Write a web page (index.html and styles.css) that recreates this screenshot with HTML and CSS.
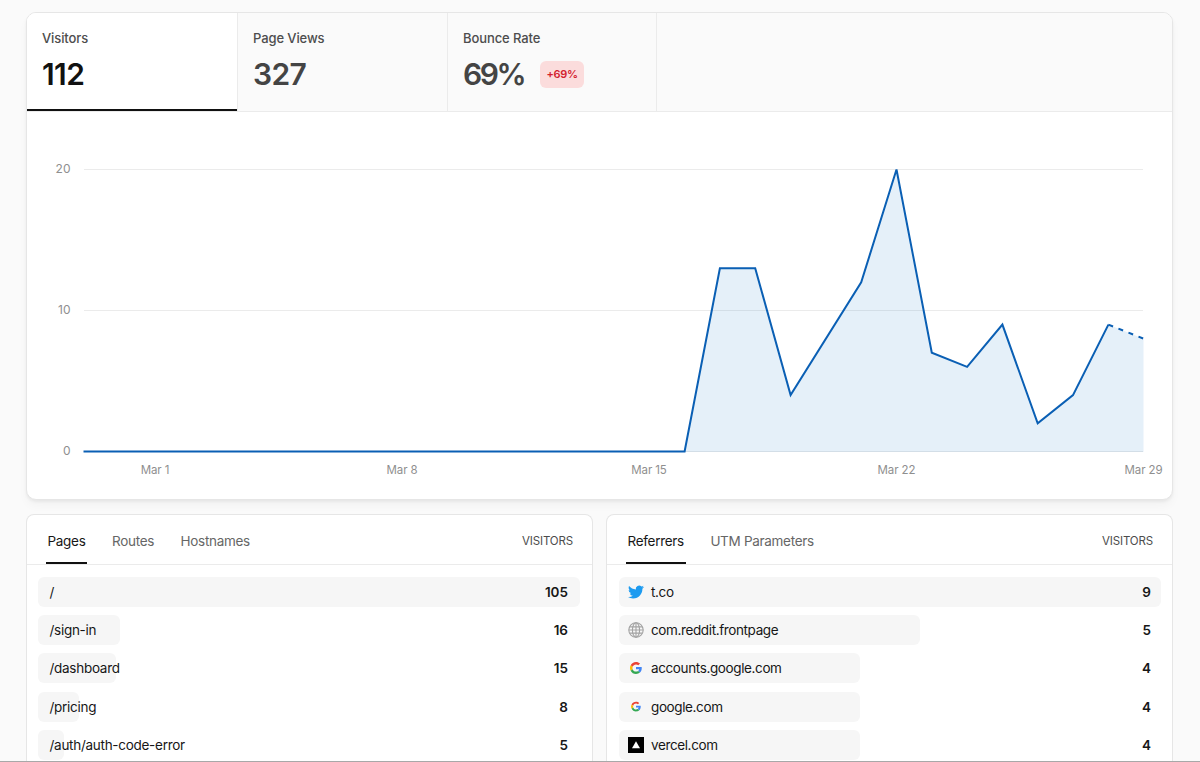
FILE: index.html
```html
<!DOCTYPE html>
<html lang="en">
<head>
  <meta charset="UTF-8">
  <meta name="viewport" content="width=device-width, initial-scale=1.0">
  <title>Analytics</title>
  <link rel="stylesheet" href="styles.css">
</head>
<body>
  <main class="dashboard">
    <section class="card overview">
      <div class="metrics">
        <div class="metric active">
          <div class="metric-label">Visitors</div>
          <div class="metric-value">112</div>
        </div>
        <div class="metric">
          <div class="metric-label">Page Views</div>
          <div class="metric-value">327</div>
        </div>
        <div class="metric">
          <div class="metric-label">Bounce Rate</div>
          <div class="metric-value percent">69% <span class="change">+69%</span></div>
        </div>
        <div class="metric"></div>
      </div>

      <svg class="chart" width="1145" height="387" viewBox="0 0 1145 387">
        <g class="grid">
          <path d="M57 57.5H1116M57 198.5H1116M57 339.5H1116" />
        </g>
        <path class="area" d="M657.2 340L692.5 156.2L727.8 156.2L763.2 283.1L833.8 170.3L869.2 57.5L904.5 240.8L939.8 254.9L975.2 212.6L1010.5 311.3L1045.8 283.1L1081.2 212.6L1116.5 226.7V340Z" />
        <polyline class="line" points="56.5,339.5 657.6,339.5 692.9,156.2 728.2,156.2 763.6,283.1 834.2,170.3 869.5,57.5 904.8,240.8 940.1,254.9 975.4,212.6 1010.7,311.3 1046,283.1 1081.4,212.6" />
        <path class="line dashed" d="M1081.4 212.6L1118 227.2" />
        <g class="axis axis-y">
          <text x="43.5" y="61">20</text>
          <text x="43.5" y="202">10</text>
          <text x="43.5" y="343">0</text>
        </g>
        <g class="axis axis-x">
          <text x="128" y="362">Mar 1</text>
          <text x="375" y="362">Mar 8</text>
          <text x="622" y="362">Mar 15</text>
          <text x="869.5" y="362">Mar 22</text>
          <text x="1116.5" y="362">Mar 29</text>
        </g>
      </svg>
    </section>

    <div class="panels">
      <section class="card panel">
        <header class="panel-header">
          <nav class="tabs">
            <a class="tab active">Pages</a>
            <a class="tab">Routes</a>
            <a class="tab">Hostnames</a>
          </nav>
          <span class="column-title">VISITORS</span>
        </header>
        <ul class="rows">
          <li class="row"><div class="bar" style="width: 100%"></div><span class="name">/</span><span class="count">105</span></li>
          <li class="row"><div class="bar" style="width: 15.2%"></div><span class="name">/sign-in</span><span class="count">16</span></li>
          <li class="row"><div class="bar" style="width: 14.3%"></div><span class="name">/dashboard</span><span class="count">15</span></li>
          <li class="row"><div class="bar" style="width: 7.6%"></div><span class="name">/pricing</span><span class="count">8</span></li>
          <li class="row"><div class="bar" style="width: 4.8%"></div><span class="name">/auth/auth-code-error</span><span class="count">5</span></li>
        </ul>
      </section>

      <section class="card panel">
        <header class="panel-header">
          <nav class="tabs">
            <a class="tab active">Referrers</a>
            <a class="tab">UTM Parameters</a>
          </nav>
          <span class="column-title">VISITORS</span>
        </header>
        <ul class="rows referrers">
          <li class="row">
            <div class="bar" style="width: 100%"></div>
            <svg class="icon" viewBox="0 0 24 24"><path fill="#1d9bf0" d="M23.95 4.57a10 10 0 0 1-2.82.77 4.96 4.96 0 0 0 2.16-2.72c-.95.55-2 .96-3.13 1.18a4.92 4.92 0 0 0-8.38 4.48C7.69 8.09 4.07 6.13 1.64 3.16a4.82 4.82 0 0 0-.67 2.48c0 1.71.87 3.21 2.19 4.1a4.9 4.9 0 0 1-2.23-.62v.06a4.92 4.92 0 0 0 3.95 4.83 5 5 0 0 1-2.21.08 4.94 4.94 0 0 0 4.6 3.42A9.87 9.87 0 0 1 0 19.54a13.99 13.99 0 0 0 7.55 2.21c9.05 0 14-7.5 14-13.98 0-.21 0-.42-.02-.63a9.94 9.94 0 0 0 2.46-2.55z"/></svg>
            <span class="name">t.co</span><span class="count">9</span>
          </li>
          <li class="row">
            <div class="bar" style="width: 55.5%"></div>
            <svg class="icon" viewBox="0 0 16 16" fill="none" stroke="#a3a3a3" stroke-width="1.1"><circle cx="8" cy="8" r="7.2"/><ellipse cx="8" cy="8" rx="3.6" ry="7.2"/><path d="M.8 8h14.4M1.8 4.9h12.4M1.8 11.1h12.4M8 .8v14.4"/></svg>
            <span class="name">com.reddit.frontpage</span><span class="count">5</span>
          </li>
          <li class="row">
            <div class="bar" style="width: 44.4%"></div>
            <svg class="icon" viewBox="-8 -8 64 64"><path fill="#ea4335" d="M24 9.5c3.54 0 6.71 1.22 9.21 3.6l6.85-6.85C35.9 2.38 30.47 0 24 0 14.62 0 6.51 5.38 2.56 13.22l7.98 6.19C12.43 13.72 17.74 9.5 24 9.5z"/><path fill="#4285f4" d="M46.98 24.55c0-1.57-.15-3.09-.38-4.55H24v9.02h12.94c-.58 2.96-2.26 5.48-4.78 7.18l7.73 6c4.51-4.18 7.09-10.36 7.09-17.65z"/><path fill="#fbbc05" d="M10.53 28.59A14.5 14.5 0 0 1 9.77 24c0-1.6.27-3.14.76-4.59l-7.98-6.19A23.94 23.94 0 0 0 0 24c0 3.88.92 7.54 2.56 10.78l7.97-6.19z"/><path fill="#34a853" d="M24 48c6.48 0 11.93-2.13 15.89-5.81l-7.73-6c-2.15 1.45-4.92 2.3-8.16 2.3-6.26 0-11.57-4.22-13.47-9.91l-7.98 6.19C6.51 42.62 14.62 48 24 48z"/></svg>
            <span class="name">accounts.google.com</span><span class="count">4</span>
          </li>
          <li class="row">
            <div class="bar" style="width: 44.4%"></div>
            <svg class="icon" viewBox="-15 -13 78 78"><path fill="#ea4335" d="M24 9.5c3.54 0 6.71 1.22 9.21 3.6l6.85-6.85C35.9 2.38 30.47 0 24 0 14.62 0 6.51 5.38 2.56 13.22l7.98 6.19C12.43 13.72 17.74 9.5 24 9.5z"/><path fill="#4285f4" d="M46.98 24.55c0-1.57-.15-3.09-.38-4.55H24v9.02h12.94c-.58 2.96-2.26 5.48-4.78 7.18l7.73 6c4.51-4.18 7.09-10.36 7.09-17.65z"/><path fill="#fbbc05" d="M10.53 28.59A14.5 14.5 0 0 1 9.77 24c0-1.6.27-3.14.76-4.59l-7.98-6.19A23.94 23.94 0 0 0 0 24c0 3.88.92 7.54 2.56 10.78l7.97-6.19z"/><path fill="#34a853" d="M24 48c6.48 0 11.93-2.13 15.89-5.81l-7.73-6c-2.15 1.45-4.92 2.3-8.16 2.3-6.26 0-11.57-4.22-13.47-9.91l-7.98 6.19C6.51 42.62 14.62 48 24 48z"/></svg>
            <span class="name">google.com</span><span class="count">4</span>
          </li>
          <li class="row">
            <div class="bar" style="width: 44.4%"></div>
            <svg class="icon" viewBox="0 0 16 16"><path d="M0 0h16v16H0z"/><path fill="#fff" d="M8 4.2l4 7H4z"/></svg>
            <span class="name">vercel.com</span><span class="count">4</span>
          </li>
        </ul>
      </section>
    </div>
  </main>
</body>
</html>
```
FILE: styles.css
```css
* {
  box-sizing: border-box;
}
body {
  font-family: Inter, "Liberation Sans", sans-serif;
  background-color: #fafafa;
  color: #171717;
  height: 762px;
  margin: 0;
  border-bottom: 1px solid #a8a8a8;
}
.dashboard {
  padding: 12px 27px 0 26px;
}
.card {
  background: white;
  border: 1px solid #e6e6e6;
  border-radius: 10px;
  overflow: hidden;
}
.overview {
  height: 488px;
  box-shadow: 0 2px 3px rgba(0, 0, 0, 0.05), 0 6px 10px rgba(0, 0, 0, 0.03);
}

/* Metrics */
.metrics {
  display: grid;
  grid-template-columns: 211px 210px 209px 1fr;
  height: 99px;
  border-bottom: 1px solid #ebebeb;
  background: #fafafa;
}
.metric {
  padding: 16px 15px 0;
  border-right: 1px solid #ebebeb;
  color: #444;
}
.metric:last-child {
  border-right: none;
}
.metric.active {
  background: white;
  box-shadow: inset 0 -2px #111;
}
.metric-label {
  font-size: 13px;
  font-weight: 500;
  line-height: 18px;
  letter-spacing: -0.1px;
  color: #4d4d4d;
}
.metric-value {
  display: flex;
  align-items: center;
  margin-top: 8px;
  font-size: 30px;
  font-weight: 600;
  line-height: 38px;
  letter-spacing: -0.6px;
}
.metric-value.percent {
  letter-spacing: -2.5px;
}
.metric.active .metric-value {
  color: #111;
}
.change {
  margin-left: 16px;
  padding: 0 6.5px;
  border-radius: 6px;
  background: #fbdcdc;
  color: #d3222f;
  font-size: 11px;
  line-height: 27px;
  letter-spacing: -0.3px;
}

/* Chart */
.chart {
  display: block;
}
.grid {
  stroke: #ebebeb;
}
.area {
  fill: rgba(0, 104, 200, 0.1);
}
.line {
  fill: none;
  stroke: #0a5fb4;
  stroke-width: 2;
}
.dashed {
  stroke-dasharray: 5 5.8;
}
.axis {
  fill: #8f8f8f;
  font-size: 12px;
}
.axis-y {
  text-anchor: end;
}
.axis-x {
  font-size: 11.5px;
  letter-spacing: -0.1px;
  text-anchor: middle;
}

/* Panels */
.panels {
  display: grid;
  grid-template-columns: 1fr 1fr;
  gap: 13px;
  margin-top: 14px;
}
.panel {
  height: 247px;
  border-bottom: none;
  border-radius: 8px 8px 0 0;
}
.panel-header {
  display: flex;
  justify-content: space-between;
  height: 50px;
  padding: 0 19px;
  border-bottom: 1px solid #ebebeb;
  line-height: 52px;
}
.tabs {
  display: flex;
  gap: 23px;
}
.tab {
  height: 49px;
  padding: 0 2px 0 1.5px;
  color: #666;
  font-size: 13.5px;
  letter-spacing: -0.3px;
}
.tab.active {
  color: #171717;
  box-shadow: inset 0 -2px #111;
}
.column-title {
  color: #4d4d4d;
  font-size: 11.5px;
  line-height: 53px;
  letter-spacing: -0.15px;
}
.rows {
  display: grid;
  gap: 8.2px;
  list-style: none;
  margin: 0;
  padding: 12px 12px 0 11px;
}
.row {
  display: flex;
  align-items: center;
  position: relative;
  height: 30px;
  padding: 0 12px 0 11.5px;
  font-size: 13.5px;
}
.bar {
  position: absolute;
  left: 0;
  top: 0;
  height: 100%;
  border-radius: 6px;
  background: #f6f6f6;
}
.icon {
  position: relative;
  width: 16px;
  height: 16px;
  margin-right: 7px;
}
.name {
  position: relative;
  letter-spacing: -0.28px;
}
.count {
  position: relative;
  margin-left: auto;
  font-weight: 600;
}
.referrers {
  padding: 12px 11px 0 12px;
}
.referrers .row {
  padding: 0 10px 0 9px;
}
.referrers .name {
  letter-spacing: -0.38px;
}
```
